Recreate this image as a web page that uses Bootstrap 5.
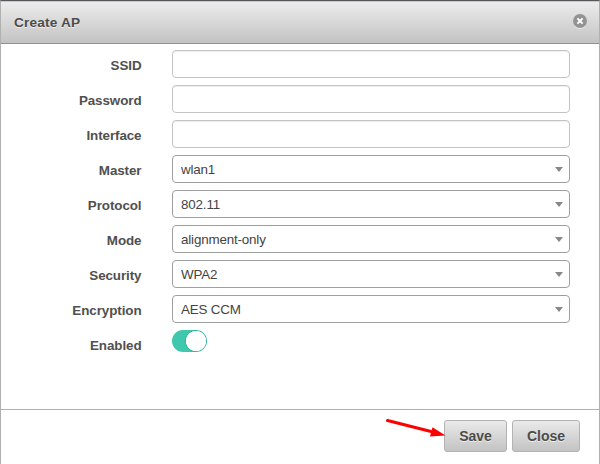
<!DOCTYPE html>
<html lang="en">
<head>
<meta charset="utf-8">
<title>Create AP</title>
<link rel="stylesheet" href="https://cdn.jsdelivr.net/npm/bootstrap@5.3.0/dist/css/bootstrap.min.css">
<style>
body{font-family:"Liberation Sans",Arial,sans-serif;font-size:13.4px;line-height:18px;color:#444;background:#fff;overflow:hidden}
.dialog{height:464px;border:1px solid #b0b0b0;border-width:0 1px;border-top:1px solid #55555a}
.dialog-head{height:43px;background:linear-gradient(#ededed,#c3c3c3);border-bottom:1px solid #929292;padding:0 11px 0 13px;box-shadow:inset 0 1px #c9c9c9}
.dialog-title{font-size:13.6px;line-height:18px;font-weight:700;color:#4c4c4c;letter-spacing:.2px;text-shadow:0 1px #eee;padding-top:1px}
.close-btn{width:16px;height:16px;line-height:0;margin-top:-2px}
.form-area{height:366px;padding:6px 29px 0 0;border-bottom:1px solid #b0b0b0}
.line{height:28px;margin-bottom:7px}
.name{width:140.5px;margin-right:30.5px;padding-top:7px;font-weight:700;text-align:right;color:#505050;letter-spacing:-.08px}
.field.form-control,.field.form-select{height:28px;min-height:0;font-size:13.4px;line-height:18px;padding:4px 8px;border-radius:4px;color:#444;border:1px solid #c4c4c4;box-shadow:inset 0 1px 1px #00000012;background-color:#fff}
.field.form-select{border-color:#9f9f9f;box-shadow:none;padding:5px 28px 3px 8px;letter-spacing:-.17px;background-image:url("data:image/svg+xml,%3csvg xmlns='http://www.w3.org/2000/svg' viewBox='0 0 8 5'%3e%3cpath fill='%23888' d='M0 0h8L4 5z'/%3e%3c/svg%3e");background-size:8px 5px;background-position:right 6px top 11px}
.toggle{width:35px;height:22px}
.toggle .form-check-input{width:35px;height:22px;margin:0;border:0;background-color:#3fc8ad;background-image:radial-gradient(circle at 24px 11px,#fff 9.8px,#35b79d 10.5px,#3fc8ad 11.7px);background-size:100% 100%;background-position:0 0}
.dialog-foot{height:54px;padding:10px 19px 0 0;gap:5px}
.push{height:32px;font-size:14px;line-height:18px;font-weight:700;color:#4c4c4c;padding:0;border:1px solid #b3b3b3;border-radius:3px;background:linear-gradient(#eaeaea,#c3c3c3);text-shadow:0 1px #eee}
.save{width:63px}.dismiss{width:68px}
.pointer{left:379px;top:412px}
</style>
<script src="https://cdn.jsdelivr.net/npm/bootstrap@5.3.0/dist/js/bootstrap.bundle.min.js"></script>
</head>
<body>
<main class="dialog">
<header class="dialog-head d-flex align-items-center justify-content-between">
<h1 class="dialog-title m-0">Create AP</h1>
<button class="btn close-btn p-0 border-0" aria-label="Close dialog"><svg width="16" height="16" viewBox="0 0 16 16"><circle cx="8" cy="8.8" r="7.1" fill="#ededed"/><circle cx="8" cy="8" r="7" fill="#939393"/><path d="M5.4 5.4l5.2 5.2m0-5.2l-5.2 5.2" stroke="#fff" stroke-width="2"/></svg></button>
</header>
<form class="form-area">
<div class="line d-flex"><label class="name flex-shrink-0" for="a">SSID</label><input id="a" class="form-control field"></div>
<div class="line d-flex"><label class="name flex-shrink-0" for="b">Password</label><input id="b" type="password" class="form-control field"></div>
<div class="line d-flex"><label class="name flex-shrink-0" for="c">Interface</label><input id="c" class="form-control field"></div>
<div class="line d-flex"><label class="name flex-shrink-0" for="d">Master</label><select id="d" class="form-select field"><option>wlan1</option></select></div>
<div class="line d-flex"><label class="name flex-shrink-0" for="e">Protocol</label><select id="e" class="form-select field"><option>802.11</option></select></div>
<div class="line d-flex"><label class="name flex-shrink-0" for="f">Mode</label><select id="f" class="form-select field"><option>alignment-only</option></select></div>
<div class="line d-flex"><label class="name flex-shrink-0" for="g">Security</label><select id="g" class="form-select field"><option>WPA2</option></select></div>
<div class="line d-flex"><label class="name flex-shrink-0" for="h">Encryption</label><select id="h" class="form-select field"><option>AES CCM</option></select></div>
<div class="line d-flex"><label class="name flex-shrink-0" for="i">Enabled</label><div class="toggle form-switch p-0"><input id="i" type="checkbox" role="switch" class="form-check-input" checked></div></div>
</form>
<footer class="dialog-foot d-flex justify-content-end"><button class="btn push save">Save</button><button class="btn push dismiss">Close</button></footer>
</main>
<svg class="pointer position-absolute pe-none" width="70" height="30" viewBox="379 412 70 30"><path d="M387.5 420.5L434 432.3" stroke="#f00" stroke-width="3" stroke-linecap="round"/><path d="M445.5 435.5L432.5 427.2L430 436.5Z" fill="#f00"/></svg>
</body>
</html>
